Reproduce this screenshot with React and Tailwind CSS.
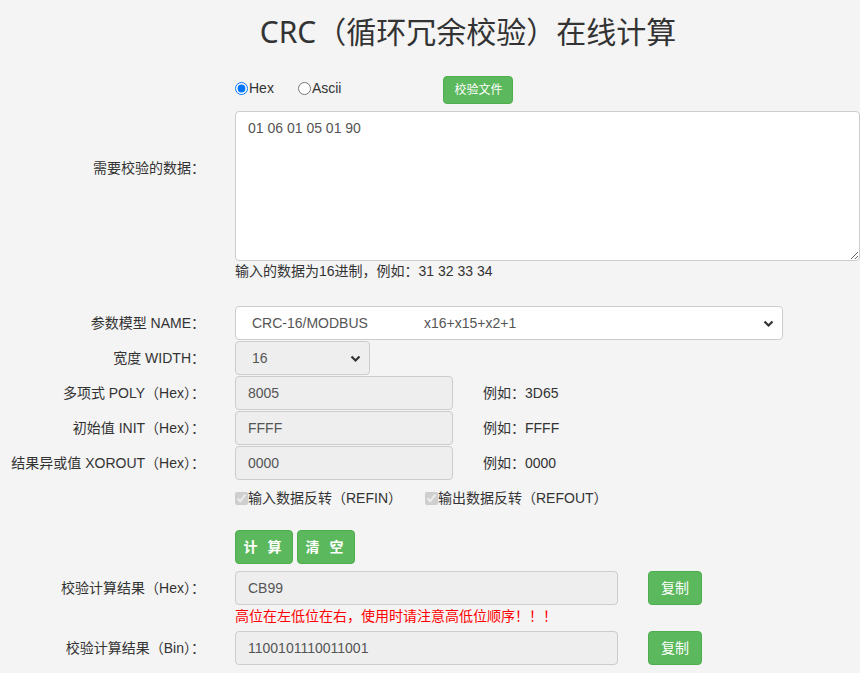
const sans = { fontFamily: '"Liberation Sans", Arial, "Noto Sans CJK SC", sans-serif' }

function Label({ children, className = '' }) {
  return <div className={`w-[205px] shrink-0 text-right text-[14px] leading-5 text-[#333] ${className}`}>{children}</div>
}

function Row({ label, children, className = '' }) {
  return (
    <div className={`flex items-center ${className}`}>
      <Label>{label}</Label>
      <div className="ml-[30px] flex items-center">{children}</div>
    </div>
  )
}

function Field({ value, w }) {
  return (
    <input readOnly disabled value={value}
      className={`${w} h-[34px] rounded-[4px] border border-[#ccc] bg-[#eee] px-3 text-[14px] text-[#555]`} />
  )
}

function Chevron() {
  return (
    <svg width="11" height="8" viewBox="0 0 11 8" className="pointer-events-none absolute right-[8px] top-[13px]">
      <path d="M1.5 1.5 L5.5 5.5 L9.5 1.5" fill="none" stroke="#333" strokeWidth="2.2" />
    </svg>
  )
}

function GreenBtn({ children, className = '' }) {
  return (
    <button className={`rounded-[4px] border border-[#4cae4c] bg-[#5cb85c] text-white ${className}`}>{children}</button>
  )
}

export default function App() {
  return (
    <div className="min-h-[673px] w-full overflow-hidden bg-[#f4f4f4] text-[#333]" style={sans}>
      <div className="w-[936px]">
        <h1 className="flex h-[62px] items-center justify-center text-[30px] text-[#333]"
          style={{ fontFamily: '"Noto Sans", "Noto Sans CJK SC", sans-serif' }}>
          CRC（循环冗余校验）在线计算
        </h1>

        <div className="mt-[14px] flex items-start">
          <Label className="mt-[82px]">需要校验的数据：</Label>
          <div className="ml-[30px] flex flex-col">
            <div className="flex h-[28px] items-center text-[14px]">
              <label className="-mt-[3px] flex items-center">
                <input type="radio" name="fmt" defaultChecked className="m-0 h-[13px] w-[13px]" />
                <span className="ml-px">Hex</span>
              </label>
              <label className="-mt-[3px] ml-[24px] flex items-center">
                <input type="radio" name="fmt" className="m-0 h-[13px] w-[13px]" />
                <span className="ml-px">Ascii</span>
              </label>
              <GreenBtn className="ml-[102px] h-[28px] w-[70px] text-[12px]">校验文件</GreenBtn>
            </div>
            <textarea defaultValue="01 06 01 05 01 90"
              className="mt-[7px] h-[150px] w-[625px] rounded-[4px] border border-[#ccc] bg-white px-3 py-[6px] text-[14px] leading-5 text-[#555]" />
            <div className="h-5 text-[14px] leading-5 text-[#333]">输入的数据为16进制，例如：31 32 33 34</div>
          </div>
        </div>

        <Row label="参数模型 NAME：" className="mt-[25px]">
          <div className="relative flex h-[34px] w-[548px] items-center rounded-[4px] border border-[#ccc] bg-white pl-4 text-[14px] text-[#555]">
            <span className="w-[172px]">CRC-16/MODBUS</span>
            <span>x16+x15+x2+1</span>
            <Chevron />
          </div>
        </Row>

        <Row label="宽度 WIDTH：" className="mt-px">
          <div className="relative flex h-[34px] w-[135px] items-center rounded-[4px] border border-[#ccc] bg-[#eee] pl-4 text-[14px] text-[#555]">
            <span>16</span>
            <Chevron />
          </div>
        </Row>

        <Row label="多项式 POLY（Hex）：" className="mt-px">
          <Field value="8005" w="w-[218px]" />
          <span className="ml-[30px] text-[14px]">例如：3D65</span>
        </Row>
        <Row label="初始值 INIT（Hex）：" className="mt-px">
          <Field value="FFFF" w="w-[218px]" />
          <span className="ml-[30px] text-[14px]">例如：FFFF</span>
        </Row>
        <Row label="结果异或值 XOROUT（Hex）：" className="mt-px">
          <Field value="0000" w="w-[218px]" />
          <span className="ml-[30px] text-[14px]">例如：0000</span>
        </Row>

        <Row label="" className="mt-[8px] h-5">
          <label className="flex items-center text-[14px]">
            <input type="checkbox" checked disabled readOnly className="m-0 h-[13px] w-[13px]" />
            <span>输入数据反转（REFIN）</span>
          </label>
          <label className="ml-[23px] flex items-center text-[14px]">
            <input type="checkbox" checked disabled readOnly className="m-0 h-[13px] w-[13px]" />
            <span>输出数据反转（REFOUT）</span>
          </label>
        </Row>

        <Row label="" className="mt-[22px]">
          <GreenBtn className="h-[34px] w-[58px] text-[14px] font-bold tracking-[3px]">计 算</GreenBtn>
          <GreenBtn className="ml-[4px] h-[34px] w-[58px] text-[14px] font-bold tracking-[3px]">清 空</GreenBtn>
        </Row>

        <Row label="校验计算结果（Hex）：" className="mt-[7px]">
          <Field value="CB99" w="w-[383px]" />
          <GreenBtn className="ml-[30px] h-[34px] w-[54px] text-[14px]">复制</GreenBtn>
        </Row>
        <div className="ml-[235px] h-[26px] pt-[1px] text-[14px] leading-5 text-[#ff0000]">高位在左低位在右，使用时请注意高低位顺序！！！</div>
        <Row label="校验计算结果（Bin）：">
          <Field value="1100101110011001" w="w-[383px]" />
          <GreenBtn className="ml-[30px] h-[34px] w-[54px] text-[14px]">复制</GreenBtn>
        </Row>
      </div>
    </div>
  )
}
